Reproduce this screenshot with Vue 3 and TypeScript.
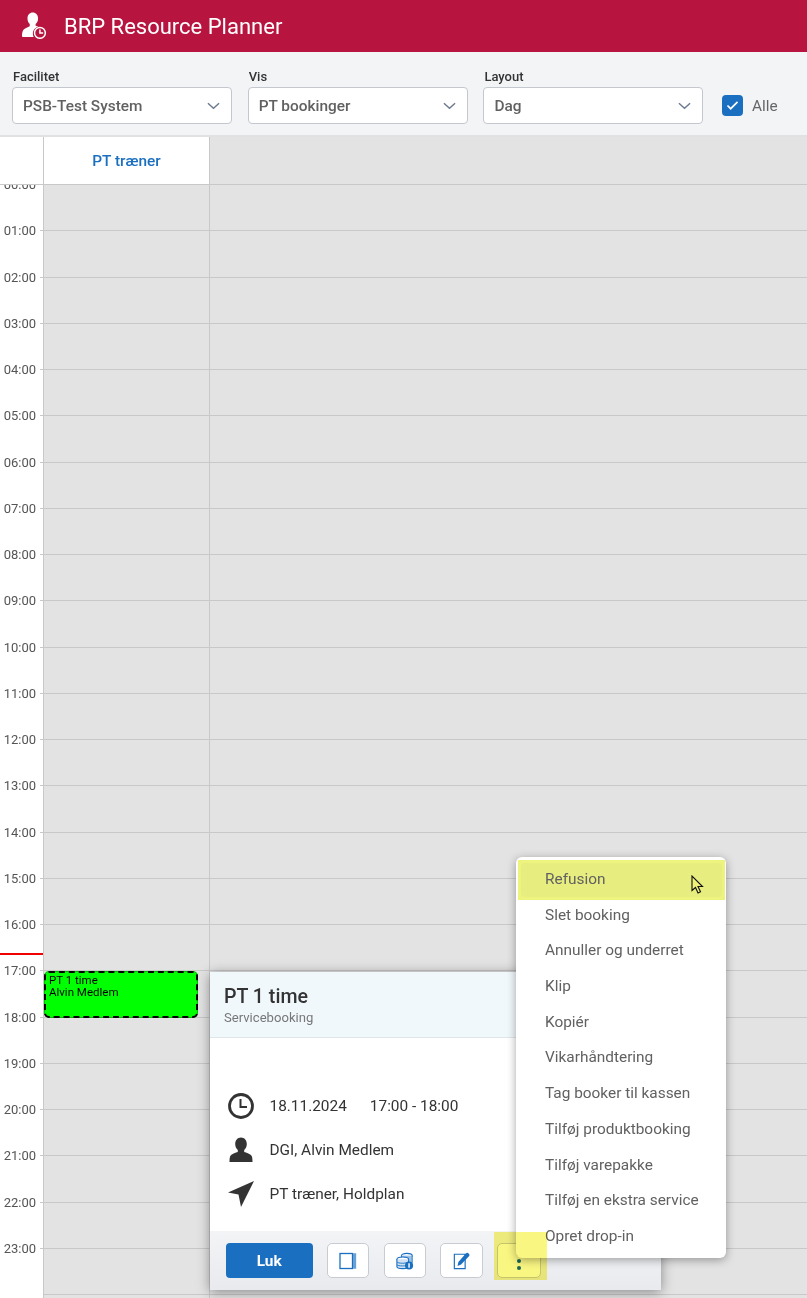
<script setup lang="ts">
const hours: string[] = Array.from({ length: 24 }, (_, i) => `${String(i).padStart(2, '0')}:00`)
const filters = [
  { label: 'Facilitet', value: 'PSB-Test System' },
  { label: 'Vis', value: 'PT bookinger' },
  { label: 'Layout', value: 'Dag' },
]
const menu: string[] = [
  'Refusion', 'Slet booking', 'Annuller og underret', 'Klip', 'Kopiér', 'Vikarhåndtering',
  'Tag booker til kassen', 'Tilføj produktbooking', 'Tilføj varepakke', 'Tilføj en ekstra service', 'Opret drop-in',
]
</script>

<template>
  <div class="page">
    <header class="topbar">
      <svg class="logo" viewBox="0 0 24.500 27.500" width="24" height="27">
        <path fill="#fff" d="M11 .5c3.200 0 5.400 2.600 5.400 6 0 2.400-1 4.500-2.500 5.700v1.700c1 .4 2 .8 3 1.200-3.300.6-5.800 3.500-5.800 7 0 1.200.3 2.300.8 3.300H.8c-.5 0-.8-.4-.8-.9 0-2.800.5-5.600 2-6.900 1.500-1.300 3.800-2.400 5.900-3.200v-2.200C6.600 11 5.600 8.900 5.600 6.500 5.600 3.100 7.800.5 11 .5z"/>
        <circle cx="18.300" cy="21.300" r="5.500" fill="none" stroke="#fff" stroke-width="1.500"/>
        <path d="M18.300 17.800v3.700h3.300" fill="none" stroke="#fff" stroke-width="1.500"/>
      </svg>
      <span class="app-title">BRP Resource Planner</span>
    </header>

    <section class="filters">
      <div v-for="f in filters" :key="f.label" class="field">
        <label class="field-label">{{ f.label }}</label>
        <div class="select">
          <span>{{ f.value }}</span>
          <svg viewBox="0 0 14 8" width="13" height="8"><path d="M1 1l6 5.500L13 1" fill="none" stroke="#6b7a90" stroke-width="1.500"/></svg>
        </div>
      </div>
      <div class="all">
        <span class="checkbox">
          <svg viewBox="0 0 14 12" width="13" height="11"><path d="M1.500 6l3.500 3.500L12.500 2" fill="none" stroke="#fff" stroke-width="1.800"/></svg>
        </span>
        <span class="all-label">Alle</span>
      </div>
    </section>

    <main class="calendar">
      <div class="times">
        <div class="times-head"></div>
        <div class="time-list">
          <div v-for="h in hours" :key="h" class="time-row">
            <span class="time-label">{{ h }}</span>
            <i class="tick"></i>
          </div>
        </div>
        <i class="now"></i>
      </div>
      <div class="col">
        <div class="col-head">PT træner</div>
        <div v-for="h in hours" :key="h" class="row"></div>
        <div class="event">PT 1 time<br />Alvin Medlem</div>
      </div>
      <div class="rest">
        <div class="rest-head"></div>
        <div v-for="h in hours" :key="h" class="row"></div>
      </div>
    </main>

    <aside class="popover">
      <div class="pop-head">
        <h2>PT 1 time</h2>
        <p>Servicebooking</p>
      </div>
      <div class="pop-body">
        <div class="info">
          <svg viewBox="0 0 28 28" width="28" height="28"><circle cx="14" cy="14" r="11.500" fill="none" stroke="#333" stroke-width="2.800"/><path d="M13.500 7v8h6.500" fill="none" stroke="#333" stroke-width="2"/></svg>
          <span>18.11.2024</span><span class="time">17:00 - 18:00</span>
        </div>
        <div class="info">
          <svg viewBox="0 0 28 28" width="28" height="28"><path fill="#333" d="M14 1.500c3.500 0 5.800 2.900 5.800 6.500 0 2.500-1 4.700-2.600 6v2c3.300 1 6.600 2.200 7.500 3.900.7 1.400.8 4 .8 6.100H2.500c0-2.100.1-4.700.8-6.100.9-1.700 4.200-2.900 7.500-3.900v-2c-1.600-1.300-2.600-3.500-2.600-6 0-3.600 2.300-6.500 5.800-6.500z"/></svg>
          <span>DGI, Alvin Medlem</span>
        </div>
        <div class="info">
          <svg viewBox="0 0 28 28" width="28" height="28"><path fill="#333" d="M27 1L14 27l-2.500-12.500L1 12.500z"/></svg>
          <span>PT træner, Holdplan</span>
        </div>
      </div>
      <div class="pop-foot">
        <button class="primary">Luk</button>
        <button class="icon-btn">
          <svg viewBox="0 0 18 18" width="18" height="18"><rect x="1" y="1.500" width="12.500" height="15" fill="#fff" stroke="#1a6fc0" stroke-width="1.300"/><rect x="14" y="1" width="3.200" height="16" fill="#8ab4de"/><path d="M14 3h3M14 5h3M14 7h3M14 9h3M14 11h3M14 13h3M14 15h3" stroke="#1a6fc0" stroke-width=".6"/></svg>
        </button>
        <button class="icon-btn">
          <svg viewBox="0 0 20 20" width="18" height="18"><ellipse cx="12" cy="4" rx="6" ry="2.500" fill="#fff" stroke="#1a6fc0" stroke-width="1.200"/><path d="M6 4v8h12V4" fill="#9cc2e6" stroke="#1a6fc0"/><ellipse cx="7.500" cy="8" rx="6.500" ry="2.500" fill="#fff" stroke="#1a6fc0" stroke-width="1.200"/><path d="M1 8v8c0 1.500 3 2.500 6.500 2.500S14 17.500 14 16V8" fill="#cfe1f3" stroke="#1a6fc0" stroke-width="1.200"/><path d="M1 11c1 2 11 2 13 0M1 14c1 2 11 2 13 0" fill="none" stroke="#1a6fc0"/><circle cx="14.500" cy="15" r="4.500" fill="#1a6fc0"/><path d="M14.500 12.500v5" stroke="#fff" stroke-width="1.600"/></svg>
        </button>
        <button class="icon-btn">
          <svg viewBox="0 0 20 20" width="18" height="18"><path d="M1.500 2.500h12v16h-12z" fill="#fff" stroke="#1a6fc0" stroke-width="1.300"/><path d="M5 15.500l1-4.500 8.500-9.500c.8-.8 1.800-.8 2.600 0l.6.6c.8.8.8 1.800 0 2.600L9 14z" fill="#1a6fc0"/></svg>
        </button>
        <button class="icon-btn more">
          <svg viewBox="0 0 6 20" width="6" height="20"><circle cx="3" cy="3" r="2" fill="#1a6a9c"/><circle cx="3" cy="10" r="2" fill="#1a6a9c"/><circle cx="3" cy="17" r="2" fill="#1a6a9c"/></svg>
        </button>
      </div>
    </aside>

    <nav class="menu">
      <div v-for="(m, i) in menu" :key="m" class="menu-item" :class="{ active: i === 0 }">{{ m }}</div>
    </nav>

    <i class="mark-btn"></i>
    <svg class="cursor" viewBox="0 0 14 20" width="14" height="20"><path d="M1 1v14.500l3.500-3 2.500 5.500 2.500-1.200-2.500-5.300h4.500z" fill="#f2f27a" stroke="#111" stroke-width="1.100"/></svg>
  </div>
</template>

<style>
html, body { margin: 0; background: #fff; overflow: hidden; }
</style>

<style scoped>
.page {
  position: relative;
  width: 807px;
  height: 1298px;
  overflow: hidden;
  font-family: Roboto, "Liberation Sans", sans-serif;
  background: #fff;
}
.topbar {
  height: 52px;
  background: #b7153f;
  display: flex;
  align-items: center;
  padding-left: 22px;
  gap: 18px;
  box-sizing: border-box;
}
.logo { flex: none; margin-top: -1px; }
.app-title { color: #fff; font-size: 22px; }
.filters {
  height: 83px;
  background: #f3f4f6;
  border-bottom: 2px solid #e0e1e3;
  display: flex;
  padding-left: 12px;
  gap: 15.700px;
  box-sizing: content-box;
}
.field { width: 220px; padding-top: 17px; }
.field-label {
  display: block;
  font-size: 13px;
  font-weight: 500;
  line-height: 15px;
  color: #333;
  padding-left: 1px;
  margin-bottom: 3px;
}
.select {
  height: 37px;
  box-sizing: border-box;
  background: #fff;
  border: 1px solid #c5c7cf;
  border-radius: 4px;
  display: flex;
  align-items: center;
  justify-content: space-between;
  padding: 0 11px 0 10px;
  font-size: 15.400px;
  font-weight: 500;
  color: #616161;
}
.all { display: flex; align-items: center; gap: 9px; margin-left: 3px; padding-top: 32px; height: 43px; }
.checkbox {
  width: 21px;
  height: 21px;
  border-radius: 4px;
  background: #1a6fc0;
  display: flex;
  align-items: center;
  justify-content: center;
}
.all-label { font-size: 15.400px; color: #666; }
.calendar { display: flex; height: 1161px; background: #e3e3e3; }
.times {
  position: relative;
  width: 43px;
  flex: none;
  background: #fff;
  border-right: 1px solid #c8c8c8;
}
.times-head { height: 48px; border-bottom: 1px solid #c8c8c8; box-sizing: border-box; }
.time-list { overflow: hidden; height: 1113px; }
.time-row { position: relative; height: 46.250px; }
.time-label {
  position: absolute;
  right: 7px;
  top: -7px;
  font-size: 13px;
  line-height: 14px;
  color: #555;
}
.tick { position: absolute; right: 0; top: -1px; width: 3px; height: 1px; background: #c8c8c8; }
.now { position: absolute; left: 0; right: 0; top: 816px; height: 2px; background: #f00000; }
.col {
  position: relative;
  width: 165px;
  flex: none;
  border-right: 1px solid #c8c8c8;
}
.col-head {
  height: 48px;
  background: #fff;
  border-bottom: 1px solid #c8c8c8;
  box-sizing: border-box;
  display: flex;
  align-items: center;
  justify-content: center;
  font-size: 15.400px;
  font-weight: 500;
  color: #1a6fc0;
}
.rest { flex: 1; }
.rest-head { height: 48px; border-bottom: 1px solid #c8c8c8; box-sizing: border-box; }
.row { height: 46.250px; border-bottom: 1px solid #c8c8c8; box-sizing: border-box; }
.event {
  position: absolute;
  left: 0;
  top: 834px;
  width: 154px;
  height: 47px;
  box-sizing: border-box;
  background: #00ff00;
  border: 2px dashed #000;
  border-radius: 5px;
  outline: 1px solid rgba(0, 0, 0, 0.25);
  outline-offset: -1px;
  padding: 1px 0 0 3px;
  font-size: 11.500px;
  line-height: 12px;
  color: #000;
}
.popover {
  position: absolute;
  left: 210px;
  top: 972px;
  width: 451px;
  height: 318px;
  background: #fff;
  box-shadow: 0 2px 12px rgba(0, 0, 0, 0.4);
  display: flex;
  flex-direction: column;
}
.pop-head {
  height: 66px;
  box-sizing: border-box;
  background: #f1f8fc;
  border-bottom: 1px solid #e0e6ea;
  padding: 13px 14px 0;
}
.pop-head h2 { margin: 0; font-size: 19.600px; font-weight: 500; line-height: 24px; color: #333; }
.pop-head p { margin: 1px 0 0; font-size: 13.100px; line-height: 16px; color: #777; }
.pop-body { flex: 1; padding-top: 46px; }
.info {
  display: flex;
  align-items: center;
  height: 44px;
  padding-left: 17px;
  font-size: 15.400px;
  color: #333;
}
.info svg { flex: none; margin-right: 14.500px; }
.time { margin-left: 23px; }
.pop-foot {
  height: 59px;
  box-sizing: border-box;
  background: linear-gradient(#f3f4f6, #e8eaee);
  display: flex;
  align-items: center;
  gap: 14.200px;
  padding: 0 0 0 15.700px;
}
button { font-family: inherit; box-sizing: border-box; padding: 0; cursor: pointer; }
.primary {
  width: 87px;
  height: 35px;
  background: #1a6fc0;
  border: 0;
  border-radius: 4px;
  color: #fff;
  font-size: 15.400px;
  font-weight: 700;
}
.icon-btn {
  width: 42.600px;
  height: 35px;
  background: #fff;
  border: 1px solid #c8cbd2;
  border-radius: 5px;
  display: flex;
  align-items: center;
  justify-content: center;
}
.more { width: 43.600px; }
.menu {
  position: absolute;
  left: 516px;
  top: 857px;
  width: 210px;
  height: 401px;
  box-sizing: border-box;
  padding-top: 5px;
  background: #fff;
  border-radius: 6px;
  box-shadow: 0 2px 10px rgba(0, 0, 0, 0.35);
}
.menu-item {
  height: 35.700px;
  line-height: 35.700px;
  padding-left: 29px;
  font-size: 15.400px;
  color: #616161;
  white-space: nowrap;
}
.active { position: relative; z-index: 0; }
.active::before,
.active::after {
  content: "";
  position: absolute;
  z-index: -1;
}
.active::before { left: 2px; right: 1px; top: -2px; bottom: -2px; background: #eef37d; }
.active::after { left: 5px; right: 4px; top: 1px; bottom: 1px; border-radius: 4px; background: #e7ee7f; }
.mark-btn {
  position: absolute;
  left: 494px;
  top: 1232px;
  width: 53px;
  height: 48px;
  background: #faf682;
  mix-blend-mode: multiply;
  pointer-events: none;
}
.cursor { position: absolute; left: 691px; top: 875px; }
</style>
